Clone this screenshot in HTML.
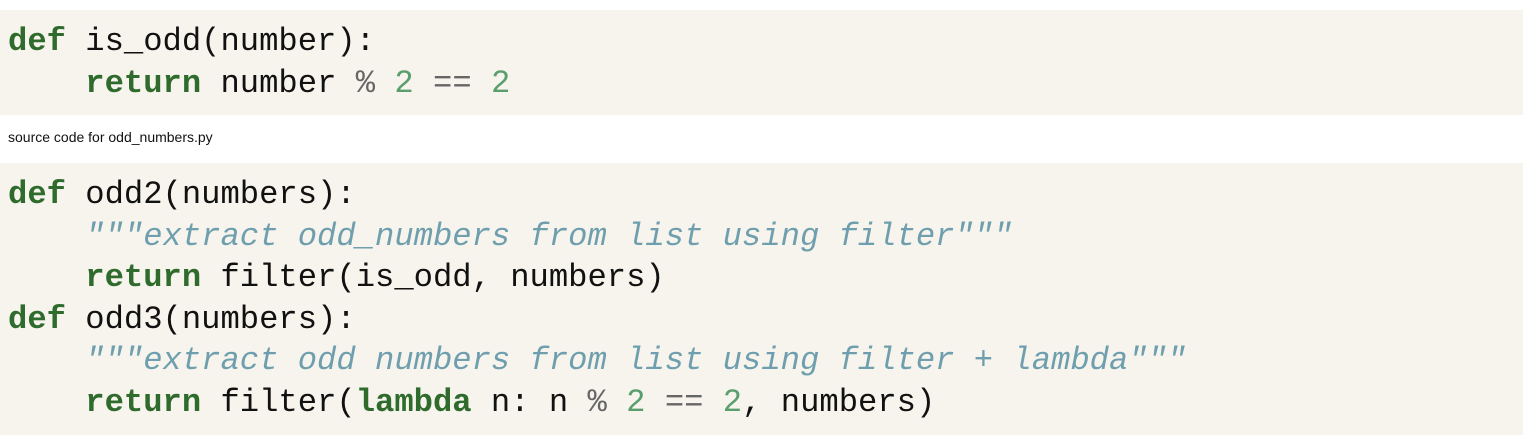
<!DOCTYPE html>
<html><head><style>
body{margin:0;width:1540px;height:440px;background:#fff;overflow:hidden}
pre{margin:0;position:absolute;left:0;width:1523px;background:#f6f4ec;font-family:"Liberation Mono","DejaVu Sans Mono",monospace;font-size:32.2px;line-height:41.6px;color:#111;padding-left:8px;box-sizing:border-box}
.k{color:#2e6b2c;font-weight:bold}
.n{color:#5a9e6e}
.o{color:#666}
.s{color:#6f9fae;font-style:italic}
.cap{position:absolute;left:8px;top:129px;font-family:"Liberation Sans",sans-serif;font-size:14px;color:#111}
</style></head><body>
<pre style="top:10px;height:105px;padding-top:11px"><span class="k">def</span> is_odd(number):
    <span class="k">return</span> number <span class="o">%</span> <span class="n">2</span> <span class="o">==</span> <span class="n">2</span></pre>
<div class="cap">source code for odd_numbers.py</div>
<pre style="top:163px;height:272px;padding-top:11px"><span class="k">def</span> odd2(numbers):
    <span class="s">"""extract odd_numbers from list using filter"""</span>
    <span class="k">return</span> filter(is_odd, numbers)
<span class="k">def</span> odd3(numbers):
    <span class="s">"""extract odd numbers from list using filter + lambda"""</span>
    <span class="k">return</span> filter(<span class="k">lambda</span> n: n <span class="o">%</span> <span class="n">2</span> <span class="o">==</span> <span class="n">2</span>, numbers)</pre>
</body></html>
